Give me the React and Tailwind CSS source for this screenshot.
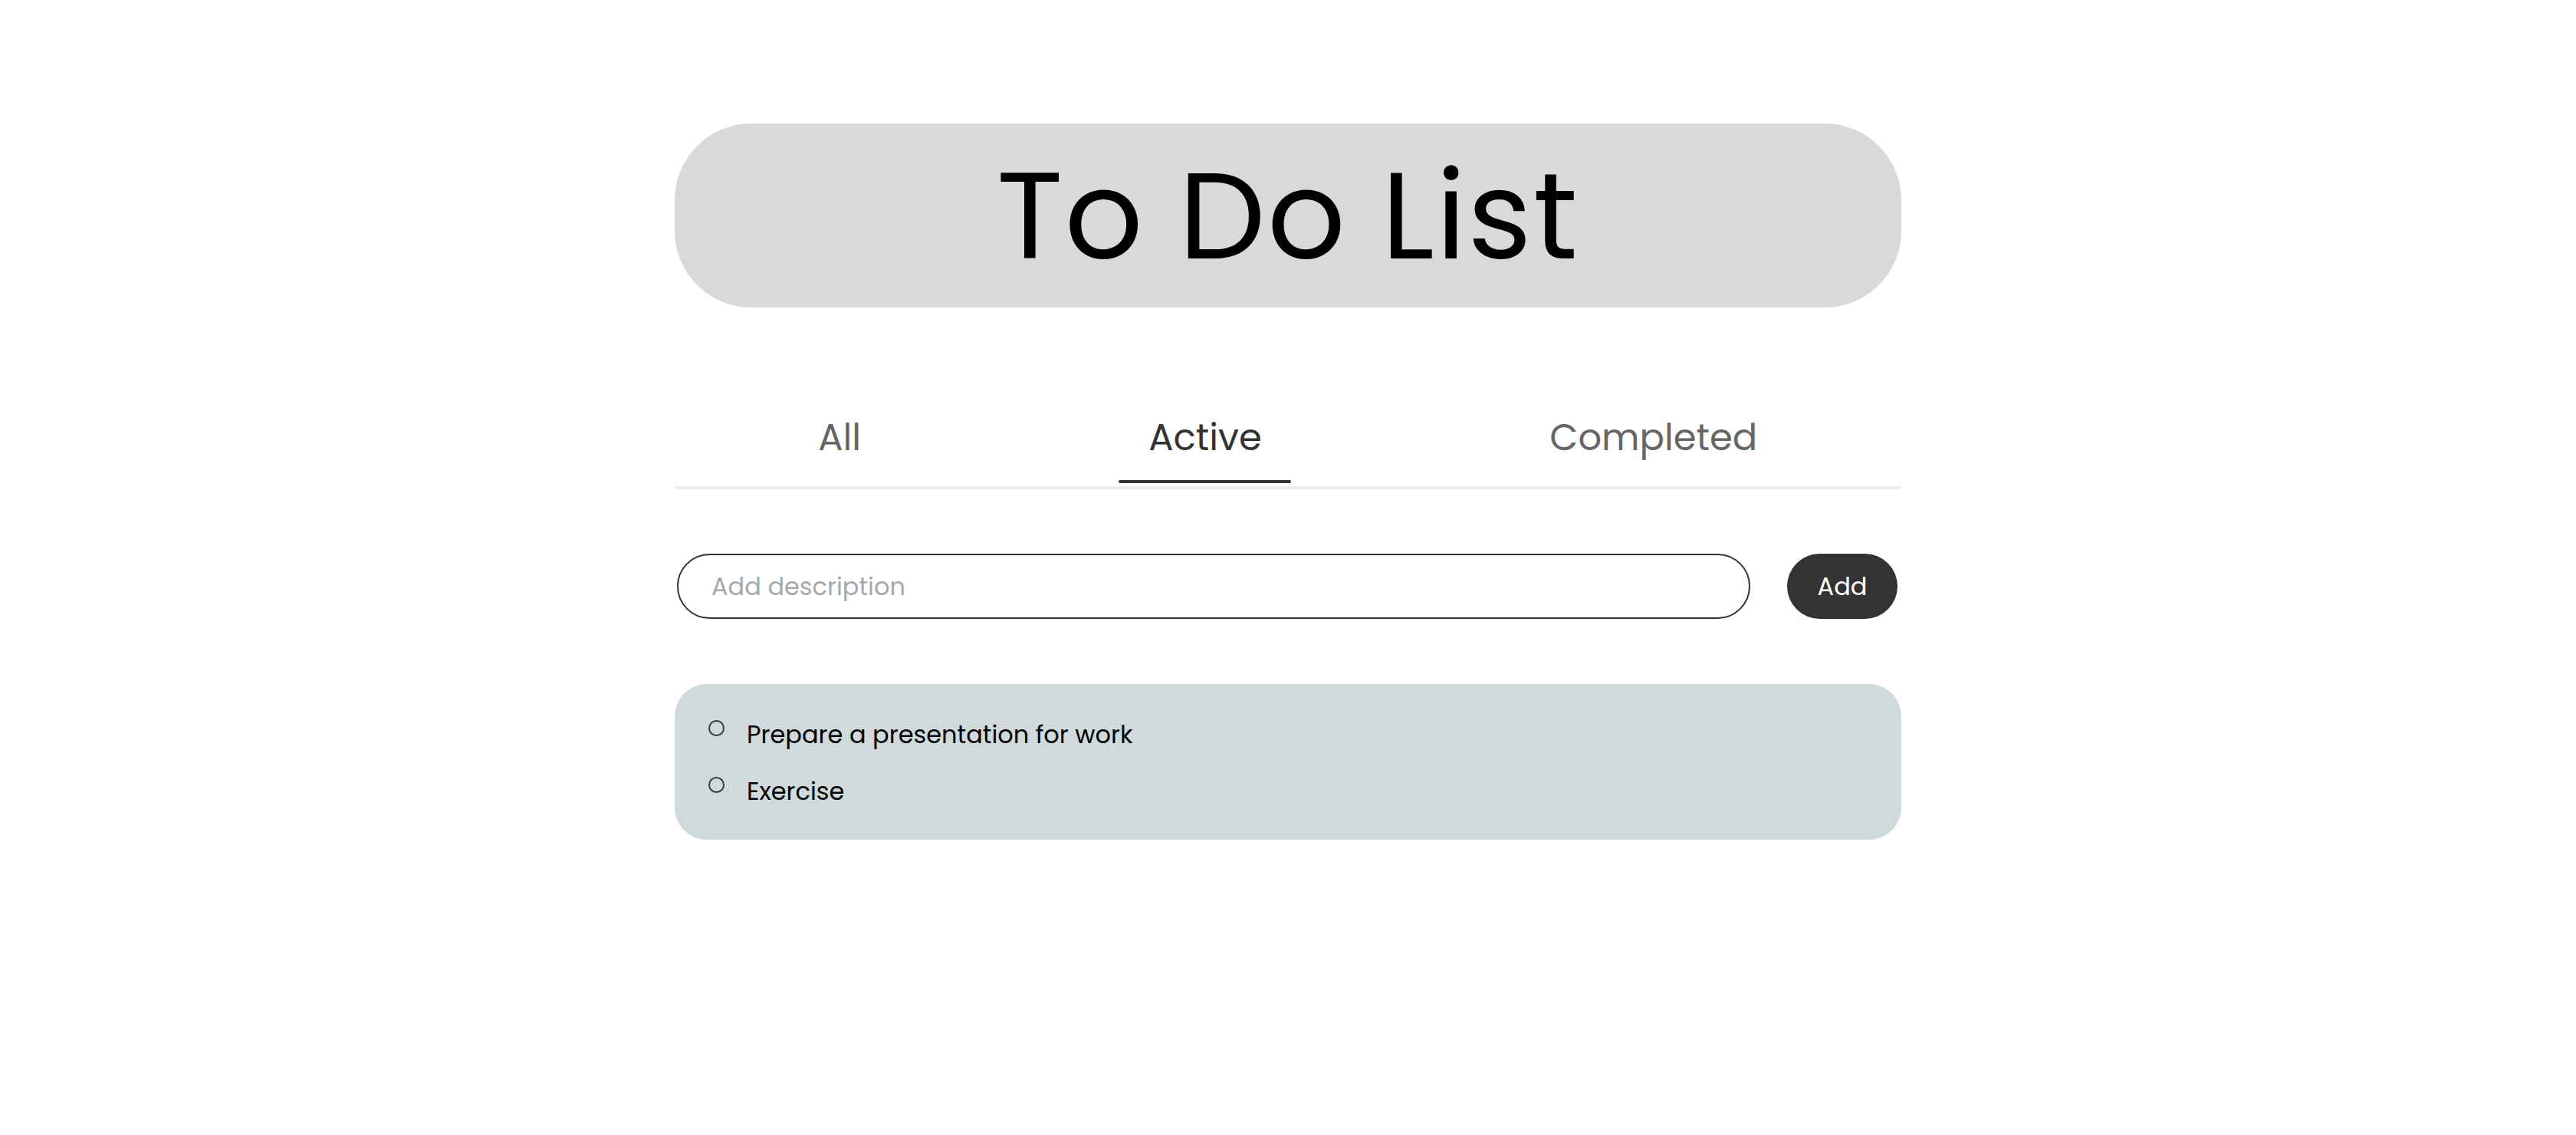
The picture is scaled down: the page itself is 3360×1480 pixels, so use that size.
import React, { useState } from 'react';

const tabs = [
  { id: 'all', label: 'All', width: 'w-[132px]' },
  { id: 'active', label: 'Active', width: 'w-[225px]' },
  { id: 'completed', label: 'Completed', width: 'w-[348px]' },
];

const App = () => {
  const [activeTab, setActiveTab] = useState('active');
  const [description, setDescription] = useState('');
  const [todos, setTodos] = useState([
    { id: 1, text: 'Prepare a presentation for work', completed: false },
    { id: 2, text: 'Exercise', completed: false },
  ]);

  const handleAdd = () => {
    if (!description.trim()) return;
    setTodos(prev => [...prev, { id: Date.now(), text: description.trim(), completed: false }]);
    setDescription('');
  };

  const toggleTodo = (id) => {
    setTodos(prev => prev.map(t => (t.id === id ? { ...t, completed: !t.completed } : t)));
  };

  const visibleTodos = todos.filter(t => {
    if (activeTab === 'active') return !t.completed;
    if (activeTab === 'completed') return t.completed;
    return true;
  });

  return (
    <div className="min-h-screen bg-white font-['Poppins','Inter',sans-serif] text-black">
      <div className="w-[1600px] mx-auto pt-[161px]">
        {/* Header */}
        <h1 className="h-[240px] rounded-[100px] bg-[#d9d9d9] flex items-center justify-center text-[160px] leading-none font-normal tracking-[2px]">
          To Do List
        </h1>

        {/* Tabs */}
        <nav className="mt-[140px] flex justify-around border-b-4 border-[#eeeeee] pb-[4px]">
          {tabs.map(tab => (
            <button
              key={tab.id}
              onClick={() => setActiveTab(tab.id)}
              className={`${tab.width} flex flex-col items-center`}
            >
              <span
                className={`text-[48px] leading-[60px] ${
                  activeTab === tab.id ? 'text-[#333333]' : 'text-[#666666]'
                }`}
              >
                {tab.label}
              </span>
              <span
                className={`mt-[25px] h-[4px] w-full rounded-full ${
                  activeTab === tab.id ? 'bg-[#333333]' : 'bg-transparent'
                }`}
              ></span>
            </button>
          ))}
        </nav>

        {/* Add row */}
        <div className="mt-[84px] flex items-center gap-[48px] pl-[3px]">
          <input
            value={description}
            onChange={e => setDescription(e.target.value)}
            placeholder="Add description"
            className="w-[1400px] h-[85px] rounded-full border-2 border-[#333333] px-[43px] text-[32px] outline-none placeholder:text-[#a8a8a8]"
          />
          <button
            onClick={handleAdd}
            className="w-[144px] h-[85px] rounded-full bg-[#333333] text-white text-[32px]"
          >
            Add
          </button>
        </div>

        {/* Todo list */}
        <ul className="mt-[85px] rounded-[42px] bg-[#d1dadb] pl-[44px] pr-[44px] pt-[42px] pb-[40px] flex flex-col gap-[27px]">
          {visibleTodos.map(todo => (
            <li key={todo.id} className="flex items-start gap-[29px]">
              <button
                onClick={() => toggleTodo(todo.id)}
                className={`mt-[5px] w-[21px] h-[21px] shrink-0 rounded-full border-2 border-[#3a3a3a] ${
                  todo.completed ? 'bg-[#333333]' : 'bg-transparent'
                }`}
              ></button>
              <span className="text-[32px] leading-[47px]">{todo.text}</span>
            </li>
          ))}
        </ul>
      </div>
    </div>
  );
};

export default App;
